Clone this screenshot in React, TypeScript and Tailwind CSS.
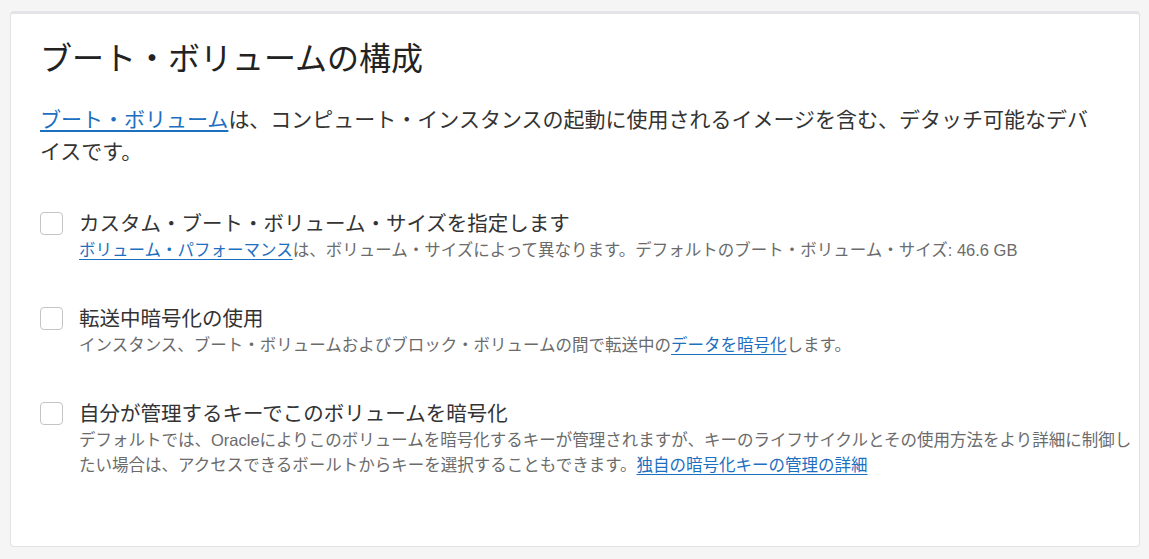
import React from 'react';

interface Option {
  label: string;
  desc: React.ReactNode;
}

const Link: React.FC<{ children: React.ReactNode }> = ({ children }) => (
  <a href="#" className="text-[#1d6fc0] underline underline-offset-[3px]">
    {children}
  </a>
);

const options: Option[] = [
  {
    label: 'カスタム・ブート・ボリューム・サイズを指定します',
    desc: (
      <>
        <Link>ボリューム・パフォーマンス</Link>は、ボリューム・サイズによって異なります。デフォルトのブート・ボリューム・サイズ: 46.6 GB
      </>
    ),
  },
  {
    label: '転送中暗号化の使用',
    desc: (
      <>
        インスタンス、ブート・ボリュームおよびブロック・ボリュームの間で転送中の<Link>データを暗号化</Link>します。
      </>
    ),
  },
  {
    label: '自分が管理するキーでこのボリュームを暗号化',
    desc: (
      <>
        デフォルトでは、Oracleによりこのボリュームを暗号化するキーが管理されますが、キーのライフサイクルとその使用方法をより詳細に制御したい場合は、アクセスできるボールトからキーを選択することもできます。<Link>独自の暗号化キーの管理の詳細</Link>
      </>
    ),
  },
];

const App: React.FC = () => {
  return (
    <div
      className="min-h-[559px] bg-[#f5f5f5] pl-[10px] pt-[11px]"
      style={{ fontFamily: '"Liberation Sans", "Noto Sans CJK JP", sans-serif' }}
    >
      <div className="w-[1130px] h-[536px] bg-white rounded-[4px] border border-[#e2e2e2] border-t-[3px] border-t-[#e4e4e8] pl-[29px] pt-[25px]">
        {/* Title */}
        <h1 className="text-[32px] leading-[40px] text-[#222]">ブート・ボリュームの構成</h1>

        {/* Intro */}
        <p className="mt-[25px] w-[1060px] text-[21px] leading-[32px] text-[#333]">
          <Link>ブート・ボリューム</Link>は、コンピュート・インスタンスの起動に使用されるイメージを含む、デタッチ可能なデバイスです。
        </p>

        {/* Options */}
        <div className="mt-[41px] flex flex-col gap-[41px]">
          {options.map((opt, i) => (
            <div key={i} className="flex items-start">
              <div className="mt-[3px] w-[23px] h-[23px] shrink-0 rounded-[4px] border border-[#c4c4c4] bg-white mr-[16px]" />
              <div className="w-[1064px]">
                <div className="text-[20.5px] leading-[29px] text-[#333]">{opt.label}</div>
                <div className="text-[16.5px] leading-[25px] text-[#6b6b6b]">{opt.desc}</div>
              </div>
            </div>
          ))}
        </div>
      </div>
    </div>
  );
};

export default App;
